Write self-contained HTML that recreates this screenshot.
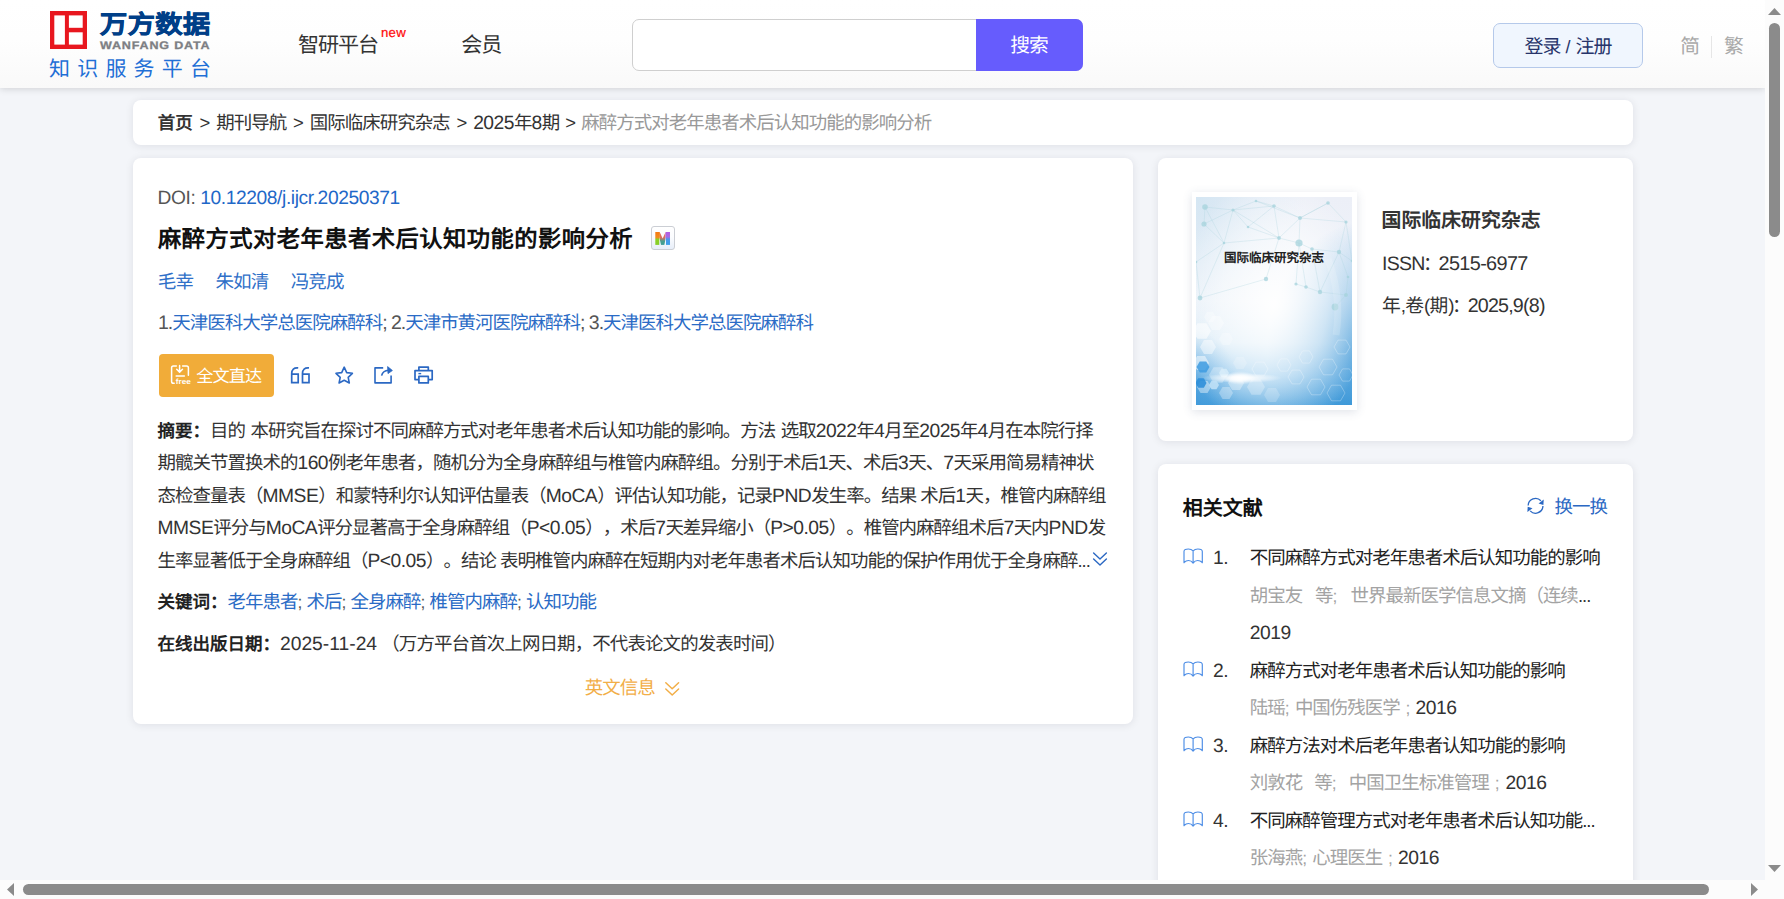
<!DOCTYPE html>
<html lang="zh-CN">
<head>
<meta charset="utf-8">
<title>麻醉方式对老年患者术后认知功能的影响分析</title>
<style>
*{box-sizing:border-box;margin:0;padding:0}
html,body{width:1784px;height:899px;overflow:hidden;background:#f3f5f9}
body{position:relative;text-rendering:geometricPrecision;text-spacing-trim:space-all;font-family:"Liberation Sans",sans-serif;color:#333;font-size:17.5px}
.abs{position:absolute;white-space:nowrap}
.t{position:absolute;white-space:nowrap;height:30px;line-height:30px}
a{color:inherit;text-decoration:none}
b{font-weight:700}
/* viewport (content minus scrollbars) */
#vp{position:absolute;left:0;top:0;width:1765px;height:880px;overflow:hidden;background:#f3f5f9}
/* header */
#hd{position:absolute;left:0;top:0;width:1765px;height:88px;background:linear-gradient(#ffffff 0%,#fefefe 45%,#f9f9f9 100%);box-shadow:0 1px 7px rgba(0,0,0,.15)}
.card{position:absolute;background:#fff;border-radius:8px;box-shadow:0 1px 9px rgba(20,25,40,.095)}
.blue{color:#2a6bc6}
.gray{color:#a3a3a3;word-spacing:1.15px}
.l{font-size:1.1em;line-height:1;letter-spacing:-.5px}
.z{font-size:105.5%;letter-spacing:-.052em;line-height:1}
.z b,.z .n{font-size:.948em;letter-spacing:0}
.z .l{font-size:1.0427em}
.sep{display:inline-block;width:23.5px;text-align:center}
/* scrollbars */
#vs{position:absolute;left:1765px;top:0;width:19px;height:880px;background:#fcfcfc}
#hs{position:absolute;left:0;top:880px;width:1765px;height:19px;background:#fcfcfc}
#cn{position:absolute;left:1765px;top:880px;width:19px;height:19px;background:#fcfcfc}
.thumb{position:absolute;background:#8b8b8b;border-radius:6px}
</style>
</head>
<body>
<div id="vp">

<!-- ================= HEADER ================= -->
<div id="hd">

<!-- logo mark -->
<svg class="abs" style="left:50px;top:11px" width="37" height="38" viewBox="0 0 37 38">
<rect x="0" y="0" width="37" height="38" fill="#e8171f"/>
<rect x="4.3" y="4.4" width="10.6" height="29.2" fill="#fff"/>
<rect x="18.9" y="4.4" width="13.8" height="12.4" fill="#fff"/>
<rect x="18.9" y="21.3" width="13.8" height="12.3" fill="#fff"/>
</svg>
<div class="abs" id="lg1" style="left:100px;top:7px;height:36px;line-height:36px;font-size:27.2px;font-weight:900;color:#003f88;-webkit-text-stroke:.75px #003f88;letter-spacing:0.45px;transform-origin:0 50%;transform:scale(1,.92)">万方数据</div>
<div class="abs" id="lg2" style="left:100px;top:38.8px;height:14px;line-height:14px;font-size:11px;font-weight:700;color:#7d7f83;-webkit-text-stroke:.3px #7d7f83;letter-spacing:.72px;transform-origin:0 50%;transform:scaleX(1.14)">WANFANG DATA</div>
<div class="abs" id="lg3" style="left:49px;top:54.7px;height:30px;line-height:30px;font-size:21px;font-weight:300;color:#1f6fd6;letter-spacing:7.2px">知识服务平台</div>
<!-- nav -->
<div class="abs" id="nv1" style="left:298px;top:31.3px;height:30px;line-height:30px;font-size:20px;color:#333"><span class="z">智研平台</span></div>
<div class="abs" id="nvnew" style="left:380.9px;top:24.9px;height:16px;line-height:16px;font-size:13.2px;letter-spacing:.35px;color:#ff0a0a;-webkit-text-stroke:.22px #ff0a0a">new</div>
<div class="abs" id="nv2" style="left:461.3px;top:31.3px;height:30px;line-height:30px;font-size:20px;color:#333"><span class="z">会员</span></div>
<!-- search -->
<div class="abs" style="left:632px;top:19px;width:451px;height:52px;border:1px solid #cfcfcf;border-radius:7px;background:#fff"></div>
<div class="abs" id="sbtn" style="left:975.5px;top:19px;width:107px;height:52px;border-radius:0 7px 7px 0;background:#665cfd;color:#fff;font-size:18.75px;line-height:54.6px;text-align:center"><span class="z">搜索</span></div>
<!-- login -->
<div class="abs" id="login" style="left:1493px;top:23px;width:150px;height:45px;border:1px solid #b5c9ea;border-radius:7px;background:#f0f6fe;color:#27346a;font-size:18px;letter-spacing:.3px;line-height:44px;text-align:center;padding-top:1px"><span class="z">登录<span class="n"> / </span>注册</span></div>
<div class="abs" id="jian" style="left:1680.3px;top:32px;height:30px;line-height:30px;font-size:18.75px;color:#a9a9a9"><span class="z">简</span></div>
<div class="abs" style="left:1711px;top:36px;width:1px;height:22px;background:#e6e6e6"></div>
<div class="abs" id="fan" style="left:1724px;top:32px;height:30px;line-height:30px;font-size:18.75px;color:#a9a9a9"><span class="z">繁</span></div>

</div>

<!-- ================= BREADCRUMB ================= -->
<div class="card" style="left:133px;top:100px;width:1500px;height:45px">

<div class="abs" id="crumb" style="left:24.7px;top:8px;height:30px;line-height:30px;font-size:17.5px;color:#333"><span class="z"><b id="c0">首页</b><span class="sep">&gt;</span><span id="c1">期刊导航</span><span class="sep">&gt;</span><span id="c2">国际临床研究杂志</span><span class="sep">&gt;</span><span id="c3"><span class="l">2025</span>年<span class="l">8</span>期</span><span class="sep" style="width:22.2px">&gt;</span><span id="c4" style="color:#999">麻醉方式对老年患者术后认知功能的影响分析</span></span></div>

</div>

<!-- ================= MAIN CARD ================= -->
<div class="card" id="main" style="left:133px;top:158px;width:1000px;height:565.5px">

<div class="t" id="doi" style="left:24.5px;top:25.8px;font-size:19.2px;letter-spacing:-.4px"><span style="color:#555">DOI: </span><span class="blue" id="doin" style="color:#1f68c8">10.12208/j.ijcr.20250371</span></div>
<div class="t" id="ttl" style="left:25px;top:66.3px;font-size:23.3px;letter-spacing:.45px;font-weight:700;color:#111">麻醉方式对老年患者术后认知功能的影响分析</div>
<!-- M badge -->
<div class="abs" style="left:518.3px;top:68.2px;width:23.4px;height:23.6px;border:1.5px solid #cbced4;border-radius:3px;background:linear-gradient(#ffffff 0%,#fbfcfe 45%,#e7eef9 100%)"></div>
<svg class="abs" style="left:518px;top:68px" width="24" height="24" viewBox="0 0 24 24">
<defs>
<linearGradient id="m1" x1="0" y1="0" x2="0" y2="1"><stop offset="0" stop-color="#f67a12"/><stop offset=".42" stop-color="#f08a1e"/><stop offset=".58" stop-color="#8ccf24"/><stop offset="1" stop-color="#86cf2a"/></linearGradient>
<linearGradient id="m2" x1="0" y1="0" x2="0" y2="1"><stop offset="0" stop-color="#ee6a55"/><stop offset=".45" stop-color="#d9705f"/><stop offset=".7" stop-color="#4a9f8f"/><stop offset="1" stop-color="#3d9c94"/></linearGradient>
<linearGradient id="m3" x1="0" y1="0" x2="0" y2="1"><stop offset="0" stop-color="#b45be3"/><stop offset=".38" stop-color="#a86be6"/><stop offset=".55" stop-color="#4a98ea"/><stop offset="1" stop-color="#3a9fea"/></linearGradient>
<clipPath id="mc"><path d="M4.3 18.9 V6 H8.7 L11.65 12.4 L14.6 6 H19 V18.9 H15 V11.3 L13.3 18.9 H10 L8.3 11.3 V18.9 Z"/></clipPath>
</defs>
<g clip-path="url(#mc)"><rect x="4" y="6" width="4.9" height="12.9" fill="url(#m1)"/><rect x="8.9" y="6" width="5.6" height="12.9" fill="url(#m2)"/><rect x="14.5" y="6" width="4.8" height="12.9" fill="url(#m3)"/></g>
</svg>
<div class="t blue" id="au" style="left:24.8px;top:108.8px;font-size:17.6px;color:#3070c8"><span class="z"><span id="au1">毛幸</span><span id="au2" style="margin-left:22.5px">朱如清</span><span id="au3" style="margin-left:22.5px">冯竞成</span></span></div>
<div class="t" id="aff" style="left:25px;top:149.5px;font-size:17.5px;color:#555"><span class="z"><span class="n" style="font-size:1.06em;letter-spacing:-1.05px">1.</span><span class="blue">天津医科大学总医院麻醉科</span><span class="n" style="font-size:1.06em;letter-spacing:-1.05px">; 2.</span><span class="blue">天津市黄河医院麻醉科</span><span class="n" style="font-size:1.06em;letter-spacing:-1.05px">; 3.</span><span class="blue">天津医科大学总医院麻醉科</span></span></div>
<!-- full text button -->
<div class="abs" id="ftbtn" style="left:26px;top:196px;width:115px;height:43px;border-radius:4px;background:#f1ac39"></div>
<svg class="abs" style="left:36px;top:205px" width="24" height="24" viewBox="0 0 24 24" fill="none" stroke="#fff" stroke-width="1.5" stroke-linecap="round" stroke-linejoin="round">
<path d="M7.4 2.9 H4.4 Q2.6 2.9 2.6 4.7 V18.4 Q2.6 20.2 4.4 20.2 H5.2"/>
<path d="M13.6 2.9 H17.6 Q19.4 2.9 19.4 4.7 V12.3"/>
<path d="M10.6 2.6 V8.6 M7.7 6.3 L10.6 9.1 L13.5 6.3"/>
<path d="M7.2 12.9 H15.4"/>
<text x="6.8" y="20.7" font-family="Liberation Sans, sans-serif" font-size="7.6" font-weight="700" fill="#fff" stroke="none" textLength="15" lengthAdjust="spacingAndGlyphs">free</text>
</svg>
<div class="abs" id="fttx" style="left:63.2px;top:203.6px;height:30px;line-height:30px;font-size:16.25px;color:#fff"><span class="z">全文直达</span></div>
<!-- action icons -->
<svg class="abs" style="left:155px;top:206px" width="24" height="22" viewBox="0 0 24 22" fill="none" stroke="#2b68c3" stroke-width="1.7" stroke-linejoin="miter">
<path d="M10.2 3.9 Q3.7 3.3 3.7 9.6 V18.6 H10.2 V10.2 H3.7"/>
<path d="M21 3.9 Q14.5 3.3 14.5 9.6 V18.6 H21 V10.2 H14.5"/>
</svg>
<svg class="abs" style="left:200px;top:206px" width="22" height="22" viewBox="0 0 22 22" fill="none" stroke="#2b68c3" stroke-width="1.6" stroke-linejoin="round">
<path d="M11.2 3.2 L13.7 8.6 L19.4 9.3 L15.2 13.3 L16.3 19 L11.2 16.2 L6.1 19 L7.2 13.3 L3 9.3 L8.7 8.6 Z"/>
</svg>
<svg class="abs" style="left:239px;top:206px" width="24" height="22" viewBox="0 0 24 22" fill="none" stroke="#2b68c3" stroke-width="1.6" stroke-linejoin="round" stroke-linecap="butt">
<path d="M11.2 3.9 H3 V18.9 H19.1 V11.4"/>
<path d="M9.6 11.6 Q10.8 6.6 16.6 6.3"/>
<path d="M15.6 2.6 L20.4 6.5 L16 9.6 Z" fill="#2b68c3" stroke-width="0.8"/>
</svg>
<svg class="abs" style="left:279px;top:206px" width="24" height="22" viewBox="0 0 24 22" fill="none" stroke="#2b68c3" stroke-width="1.7" stroke-linejoin="round">
<path d="M6.9 6.6 V3.1 H16.3 V6.6"/>
<path d="M6.9 15.6 H3 V6.6 H20.2 V15.6 H16.3"/>
<path d="M6.9 12.4 H16.3 V18.9 H6.9 Z"/>
<path d="M6.4 9.6 H9.2" stroke-width="1.4"/>
</svg>
<!-- abstract -->
<div class="abs" id="abs" style="left:24.5px;top:256.5px;font-size:17.5px;line-height:32.5px;color:#333">
<div id="L1" style="word-spacing:1.3px"><span class="z"><b style="color:#222">摘要：</b><span id="L1t">目的 本研究旨在探讨不同麻醉方式对老年患者术后认知功能的影响。方法 选取<span class="l">2022</span>年<span class="l">4</span>月至<span class="l">2025</span>年<span class="l">4</span>月在本院行择</span></span></div>
<div id="L2"><span class="z">期髋关节置换术的<span class="l">160</span>例老年患者，随机分为全身麻醉组与椎管内麻醉组。分别于术后<span class="l">1</span>天、术后<span class="l">3</span>天、<span class="l">7</span>天采用简易精神状</span></div>
<div id="L3"><span class="z">态检查量表（<span class="l">MMSE</span>）和蒙特利尔认知评估量表（<span class="l">MoCA</span>）评估认知功能，记录<span class="l">PND</span>发生率。结果 术后<span class="l">1</span>天，椎管内麻醉组</span></div>
<div id="L4"><span class="z" style="letter-spacing:-.0535em"><span class="l">MMSE</span>评分与<span class="l">MoCA</span>评分显著高于全身麻醉组（<span class="l">P&lt;0.05</span>），术后<span class="l">7</span>天差异缩小（<span class="l">P&gt;0.05</span>）。椎管内麻醉组术后<span class="l">7</span>天内<span class="l">PND</span>发</span></div>
<div id="L5"><span class="z">生率显著低于全身麻醉组（<span class="l">P&lt;0.05</span>）。结论 表明椎管内麻醉在短期内对老年患者术后认知功能的保护作用优于全身麻醉...</span></div>
</div>
<svg class="abs" style="left:958px;top:393px" width="18" height="16" viewBox="0 0 18 16" fill="none" stroke="#2b68c3" stroke-width="1.4" stroke-linecap="round" stroke-linejoin="round">
<path d="M2.6 2 L9 8 L15.4 2 M2.6 8 L9 14 L15.4 8"/>
</svg>
<div class="t" id="kw" style="left:24.5px;top:428.5px"><span class="z"><b style="color:#222">关键词：</b><span id="kwt" style="color:#555"><span class="blue">老年患者</span><span class="n" style="letter-spacing:-.35px">; </span><span class="blue">术后</span><span class="n" style="letter-spacing:-.35px">; </span><span class="blue">全身麻醉</span><span class="n" style="letter-spacing:-.35px">; </span><span class="blue">椎管内麻醉</span><span class="n" style="letter-spacing:-.35px">; </span><span class="blue">认知功能</span></span></span></div>
<div class="t" id="pd" style="left:24.5px;top:470.5px"><span class="z"><b style="color:#222">在线出版日期：</b><span id="pdd" class="l" style="letter-spacing:0">2025-11-24</span> <span id="pdn" style="letter-spacing:-.047em">（万方平台首次上网日期，不代表论文的发表时间）</span></span></div>
<div class="t" id="en" style="left:451.7px;top:515px;color:#f2ae47"><span class="z">英文信息</span></div>
<svg class="abs" style="left:530px;top:522px" width="18" height="18" viewBox="0 0 18 18" fill="none" stroke="#f2ae47" stroke-width="1.5" stroke-linecap="round" stroke-linejoin="round">
<path d="M2.8 2.8 L9.2 8.8 L15.6 2.8 M2.8 9 L9.2 15 L15.6 9"/>
</svg>

</div>

<!-- ================= JOURNAL CARD ================= -->
<div class="card" id="jn" style="left:1158px;top:158px;width:475px;height:283px">

<div class="abs" style="left:33.5px;top:34px;width:165px;height:218px;background:#fff;box-shadow:0 2px 9px rgba(60,80,120,.16)"></div>
<svg class="abs" style="left:38px;top:39px" width="156" height="208" viewBox="0 0 156 208">
<defs>
<linearGradient id="cv1" x1="0" y1="0" x2="0" y2="1"><stop offset="0" stop-color="#eceff7"/><stop offset=".5" stop-color="#f0f4fa"/><stop offset=".7" stop-color="#d6e9f6"/><stop offset=".86" stop-color="#8fc6ec"/><stop offset="1" stop-color="#4aa0db"/></linearGradient>
<radialGradient id="cv2" cx=".5" cy=".52" r=".62"><stop offset="0" stop-color="#fff" stop-opacity=".95"/><stop offset=".55" stop-color="#fff" stop-opacity=".55"/><stop offset="1" stop-color="#fff" stop-opacity="0"/></radialGradient>
<radialGradient id="cv3" cx="1.08" cy=".74" r=".62"><stop offset="0" stop-color="#2f8fd4" stop-opacity=".8"/><stop offset="1" stop-color="#2f8fd4" stop-opacity="0"/></radialGradient>
<radialGradient id="cv4" cx="-.02" cy=".94" r=".3"><stop offset="0" stop-color="#3c97da" stop-opacity=".7"/><stop offset="1" stop-color="#3c97da" stop-opacity="0"/></radialGradient>
<radialGradient id="cv5" cx=".5" cy=".5" r=".5"><stop offset="0" stop-color="#fff" stop-opacity="1"/><stop offset=".4" stop-color="#fff" stop-opacity=".7"/><stop offset="1" stop-color="#fff" stop-opacity="0"/></radialGradient>
<radialGradient id="cv6" cx="0" cy="0" r=".7"><stop offset="0" stop-color="#cfe4f2" stop-opacity=".8"/><stop offset="1" stop-color="#cfe4f2" stop-opacity="0"/></radialGradient>
</defs>
<rect width="156" height="208" fill="url(#cv1)"/>
<rect width="156" height="208" fill="url(#cv6)"/>
<rect width="156" height="208" fill="url(#cv3)"/>
<rect width="156" height="208" fill="url(#cv4)"/>
<rect width="156" height="208" fill="url(#cv2)"/>
<g stroke="#a9d2dc" stroke-width=".7" stroke-opacity=".42"><line x1="9" y1="10" x2="37" y2="13"/><line x1="37" y1="13" x2="60" y2="4"/><line x1="37" y1="13" x2="78" y2="9"/><line x1="60" y1="4" x2="78" y2="9"/><line x1="78" y1="9" x2="104" y2="21"/><line x1="104" y1="21" x2="132" y2="6"/><line x1="132" y1="6" x2="150" y2="25"/><line x1="9" y1="10" x2="8" y2="27"/><line x1="8" y1="27" x2="37" y2="13"/><line x1="37" y1="13" x2="28" y2="46"/><line x1="28" y1="46" x2="83" y2="41"/><line x1="83" y1="41" x2="104" y2="21"/><line x1="83" y1="41" x2="103" y2="46"/><line x1="103" y1="46" x2="116" y2="52"/><line x1="104" y1="21" x2="103" y2="46"/><line x1="104" y1="21" x2="150" y2="25"/><line x1="103" y1="46" x2="110" y2="90"/><line x1="116" y1="52" x2="124" y2="95"/><line x1="150" y1="25" x2="143" y2="55"/><line x1="143" y1="55" x2="124" y2="95"/><line x1="124" y1="95" x2="150" y2="98"/><line x1="150" y1="98" x2="139" y2="110"/><line x1="78" y1="9" x2="52" y2="30"/><line x1="52" y1="30" x2="83" y2="41"/><line x1="8" y1="27" x2="28" y2="46"/><line x1="28" y1="46" x2="0" y2="65"/><line x1="0" y1="65" x2="4" y2="101"/><line x1="83" y1="41" x2="70" y2="82"/><line x1="70" y1="82" x2="4" y2="101"/><line x1="116" y1="52" x2="143" y2="55"/><line x1="60" y1="4" x2="104" y2="21"/><line x1="132" y1="6" x2="104" y2="21"/><line x1="100" y1="87" x2="110" y2="90"/><line x1="110" y1="90" x2="124" y2="95"/><line x1="103" y1="46" x2="100" y2="87"/><line x1="9" y1="10" x2="28" y2="46"/><line x1="52" y1="30" x2="37" y2="13"/><line x1="156" y1="64" x2="143" y2="55"/><line x1="152" y1="80" x2="150" y2="98"/><line x1="152" y1="80" x2="143" y2="55"/><line x1="37" y1="13" x2="83" y2="41"/><line x1="4" y1="101" x2="28" y2="46"/><line x1="78" y1="9" x2="83" y2="41"/><line x1="150" y1="25" x2="156" y2="64"/></g>
<g fill="#a5d3dc" fill-opacity=".75"><circle cx="9" cy="10" r="2.8"/><circle cx="37" cy="13" r="1.6"/><circle cx="60" cy="4" r="1.3"/><circle cx="78" cy="9" r="1.8"/><circle cx="104" cy="21" r="2"/><circle cx="132" cy="6" r="1.8"/><circle cx="150" cy="25" r="1.6"/><circle cx="8" cy="27" r="2.6"/><circle cx="83" cy="41" r="1.9"/><circle cx="103" cy="46" r="3.6"/><circle cx="116" cy="52" r="1.8"/><circle cx="70" cy="82" r="2.2"/><circle cx="100" cy="87" r="1.6"/><circle cx="110" cy="90" r="1.8"/><circle cx="124" cy="95" r="2.2"/><circle cx="152" cy="80" r="1.3"/><circle cx="150" cy="98" r="2"/><circle cx="4" cy="101" r="2.4"/><circle cx="139" cy="110" r="3.4"/><circle cx="28" cy="46" r="1.3"/><circle cx="52" cy="30" r="1.3"/><circle cx="143" cy="55" r="2.2"/><circle cx="156" cy="64" r="1.3"/><circle cx="0" cy="65" r="1.3"/></g>
<g fill="#fff" fill-opacity="0.55"><polygon points="15.0,134.0 10.5,141.8 1.5,141.8 -3.0,134.0 1.5,126.2 10.5,126.2"/></g><g fill="#fff" fill-opacity="0.35"><polygon points="28.0,126.0 24.0,132.9 16.0,132.9 12.0,126.0 16.0,119.1 24.0,119.1"/></g><g fill="#fff" fill-opacity="0.45"><polygon points="20.0,150.0 16.0,156.9 8.0,156.9 4.0,150.0 8.0,143.1 16.0,143.1"/></g><g fill="#fff" fill-opacity="0.25"><polygon points="37.0,142.0 33.5,148.1 26.5,148.1 23.0,142.0 26.5,135.9 33.5,135.9"/></g><g fill="#fff" fill-opacity="0.5"><polygon points="13.0,166.0 9.0,172.9 1.0,172.9 -3.0,166.0 1.0,159.1 9.0,159.1"/></g><g fill="#fff" fill-opacity="0.3"><polygon points="31.0,178.0 26.5,185.8 17.5,185.8 13.0,178.0 17.5,170.2 26.5,170.2"/></g><g fill="#fff" fill-opacity="0.4"><polygon points="15.0,190.0 11.5,196.1 4.5,196.1 1.0,190.0 4.5,183.9 11.5,183.9"/></g><g fill="#fff" fill-opacity="0.35"><polygon points="48.0,186.0 44.0,192.9 36.0,192.9 32.0,186.0 36.0,179.1 44.0,179.1"/></g><g fill="#fff" fill-opacity="0.28"><polygon points="69.0,190.0 64.5,197.8 55.5,197.8 51.0,190.0 55.5,182.2 64.5,182.2"/></g><g fill="#fff" fill-opacity="0.3"><polygon points="37.0,196.0 33.5,202.1 26.5,202.1 23.0,196.0 26.5,189.9 33.5,189.9"/></g><g fill="#fff" fill-opacity="0.3"><polygon points="20.0,120.0 17.0,125.2 11.0,125.2 8.0,120.0 11.0,114.8 17.0,114.8"/></g><g fill="#fff" fill-opacity="0.2"><polygon points="51.0,166.0 47.5,172.1 40.5,172.1 37.0,166.0 40.5,159.9 47.5,159.9"/></g><g fill="#fff" fill-opacity="0.2"><polygon points="84.0,198.0 80.0,204.9 72.0,204.9 68.0,198.0 72.0,191.1 80.0,191.1"/></g><g fill="#3d9be0" fill-opacity="0.85"><polygon points="13.5,170.0 10.2,175.6 3.8,175.6 0.5,170.0 3.7,164.4 10.2,164.4"/></g><g fill="#2f8fd9" fill-opacity="0.9"><polygon points="10.5,186.0 7.8,190.8 2.3,190.8 -0.5,186.0 2.2,181.2 7.8,181.2"/></g><g fill="#bfe0f6" fill-opacity="0.9"><polygon points="23.0,188.0 20.5,192.3 15.5,192.3 13.0,188.0 15.5,183.7 20.5,183.7"/></g><g fill="#d9edfa" fill-opacity="0.8"><polygon points="33.0,176.0 30.5,180.3 25.5,180.3 23.0,176.0 25.5,171.7 30.5,171.7"/></g><g fill="none" stroke="#fff" stroke-opacity=".35" stroke-width=".8"><polygon points="141.0,170.0 136.5,177.8 127.5,177.8 123.0,170.0 127.5,162.2 136.5,162.2"/><polygon points="154.0,150.0 150.0,156.9 142.0,156.9 138.0,150.0 142.0,143.1 150.0,143.1"/><polygon points="129.0,190.0 124.5,197.8 115.5,197.8 111.0,190.0 115.5,182.2 124.5,182.2"/><polygon points="108.0,180.0 104.0,186.9 96.0,186.9 92.0,180.0 96.0,173.1 104.0,173.1"/><polygon points="149.0,196.0 144.5,203.8 135.5,203.8 131.0,196.0 135.5,188.2 144.5,188.2"/><polygon points="95.0,168.0 91.5,174.1 84.5,174.1 81.0,168.0 84.5,161.9 91.5,161.9"/><polygon points="157.0,178.0 153.5,184.1 146.5,184.1 143.0,178.0 146.5,171.9 153.5,171.9"/><polygon points="72.0,172.0 68.0,178.9 60.0,178.9 56.0,172.0 60.0,165.1 68.0,165.1"/><polygon points="117.0,160.0 113.5,166.1 106.5,166.1 103.0,160.0 106.5,153.9 113.5,153.9"/></g>
<ellipse cx="46" cy="181" rx="40" ry="5" fill="url(#cv5)"/>
<ellipse cx="44" cy="181" rx="16" ry="7" fill="url(#cv5)"/>
<path d="M132 62 Q146 100 140 138" stroke="#fff" stroke-opacity=".16" stroke-width="7" fill="none"/>
</svg>
<div class="abs" id="cvt" style="left:38px;top:89px;width:156px;height:22px;line-height:22px;text-align:center;font-size:12.5px;font-weight:700;color:#222;letter-spacing:0">国际临床研究杂志</div>
<div class="t" id="jt" style="left:223.6px;top:47.5px;font-size:19.8px;letter-spacing:.1px;font-weight:700;color:#333">国际临床研究杂志</div>
<div class="t" id="ji" style="left:224px;top:90.5px;font-size:18.75px;color:#333"><span class="l" id="ji1" style="font-size:1.04em;letter-spacing:-.75px">ISSN</span><span style="margin:0 -3.2px 0 -1.5px">：</span><span class="l" id="ji2" style="font-size:1.06em;letter-spacing:-.65px">2515-6977</span></div>
<div class="t" id="jy" style="left:224px;top:132.5px;font-size:18.75px;color:#333">年<span class="l" style="font-size:1em;letter-spacing:-.6px">,</span>卷<span class="l" style="font-size:1em;letter-spacing:-.9px">(</span>期<span class="l" style="font-size:1em;letter-spacing:-.9px">)</span><span style="margin:0 -3px 0 -1.7px">：</span><span class="l" id="jy2" style="font-size:1.05em;letter-spacing:-.8px">2025,9(8)</span></div>

</div>

<!-- ================= RELATED CARD ================= -->
<div class="card" id="rel" style="left:1158px;top:464px;width:475px;height:520px">

<div class="t" id="rh" style="left:24.8px;top:30px;font-size:20px;font-weight:700;color:#111">相关文献</div>
<svg class="abs" style="left:367.8px;top:32.4px" width="20" height="20" viewBox="0 0 20 20" fill="none" stroke="#2b68c3" stroke-width="1.3" stroke-linecap="butt">
<path d="M2.15 9.6 A7.4 7.4 0 0 1 14.9 4.7"/><path d="M16.95 10 A7.4 7.4 0 0 1 4.2 14.9"/>
<path d="M17.7 3.6 L17.4 8.9 L12.6 7.4 Z" fill="#2b68c3" stroke="none"/><path d="M1.4 16 L1.7 10.7 L6.5 12.2 Z" fill="#2b68c3" stroke="none"/>
</svg>
<div class="t blue" id="rsw" style="left:396.6px;top:28.2px;color:#2b68c3"><span class="z">换一换</span></div>
<svg class="abs" style="left:24px;top:84px" width="22" height="18" viewBox="0 0 22 18" fill="none" stroke="#4c8de6" stroke-width="1.15" stroke-linejoin="round" stroke-linecap="round"><path d="M2 14.7 L2 3.5 C2 1.7 4 .95 6.3 .95 C8.5 .95 10 1.6 11.1 2.8 C12.2 1.6 13.7 .95 15.9 .95 C18.2 .95 20.3 1.7 20.3 3.5 L20.3 14.7 M2 14.7 C3.5 13.1 5 12.5 6.5 12.5 C8.4 12.5 10 13.5 11.1 15.1 C12.2 13.5 13.8 12.5 15.7 12.5 C17.2 12.5 18.8 13.1 20.3 14.7 M11.1 2.8 V15"/></svg><div class="t" style="left:55px;top:79px;color:#333"><span class="l">1.</span></div><div class="t" id="r1t" style="left:91.8px;top:79px;color:#222"><span class="z">不同麻醉方式对老年患者术后认知功能的影响</span></div><div class="t gray" id="r1m" style="left:91.8px;top:116.5px"><span class="z">胡宝友<span class="n" style="letter-spacing:.35px">&nbsp; </span>等<span class="n" style="letter-spacing:.35px">;&nbsp; </span>世界最新医学信息文摘（连续<span style="color:#333">...</span></span></div><div class="t" id="r1y" style="left:91.8px;top:154px;color:#333"><span class="l" style="color:#333">2019</span></div>
<svg class="abs" style="left:24px;top:196.5px" width="22" height="18" viewBox="0 0 22 18" fill="none" stroke="#4c8de6" stroke-width="1.15" stroke-linejoin="round" stroke-linecap="round"><path d="M2 14.7 L2 3.5 C2 1.7 4 .95 6.3 .95 C8.5 .95 10 1.6 11.1 2.8 C12.2 1.6 13.7 .95 15.9 .95 C18.2 .95 20.3 1.7 20.3 3.5 L20.3 14.7 M2 14.7 C3.5 13.1 5 12.5 6.5 12.5 C8.4 12.5 10 13.5 11.1 15.1 C12.2 13.5 13.8 12.5 15.7 12.5 C17.2 12.5 18.8 13.1 20.3 14.7 M11.1 2.8 V15"/></svg><div class="t" style="left:55px;top:191.5px;color:#333"><span class="l">2.</span></div><div class="t" id="r2t" style="left:91.8px;top:191.5px;color:#222"><span class="z">麻醉方式对老年患者术后认知功能的影响</span></div><div class="t gray" id="r2m" style="left:91.8px;top:229.0px"><span class="z">陆瑶<span class="n" style="letter-spacing:-.4px">; </span>中国伤残医学<span class="n" style="letter-spacing:-.4px"> ; </span><span class="l" style="color:#333">2016</span></span></div>
<svg class="abs" style="left:24px;top:271.5px" width="22" height="18" viewBox="0 0 22 18" fill="none" stroke="#4c8de6" stroke-width="1.15" stroke-linejoin="round" stroke-linecap="round"><path d="M2 14.7 L2 3.5 C2 1.7 4 .95 6.3 .95 C8.5 .95 10 1.6 11.1 2.8 C12.2 1.6 13.7 .95 15.9 .95 C18.2 .95 20.3 1.7 20.3 3.5 L20.3 14.7 M2 14.7 C3.5 13.1 5 12.5 6.5 12.5 C8.4 12.5 10 13.5 11.1 15.1 C12.2 13.5 13.8 12.5 15.7 12.5 C17.2 12.5 18.8 13.1 20.3 14.7 M11.1 2.8 V15"/></svg><div class="t" style="left:55px;top:266.5px;color:#333"><span class="l">3.</span></div><div class="t" id="r3t" style="left:91.8px;top:266.5px;color:#222"><span class="z">麻醉方法对术后老年患者认知功能的影响</span></div><div class="t gray" id="r3m" style="left:91.8px;top:304.0px"><span class="z">刘敦花<span class="n">&nbsp; </span>等<span class="n">;&nbsp; </span>中国卫生标准管理<span class="n"> ; </span><span class="l" style="color:#333">2016</span></span></div>
<svg class="abs" style="left:24px;top:346.5px" width="22" height="18" viewBox="0 0 22 18" fill="none" stroke="#4c8de6" stroke-width="1.15" stroke-linejoin="round" stroke-linecap="round"><path d="M2 14.7 L2 3.5 C2 1.7 4 .95 6.3 .95 C8.5 .95 10 1.6 11.1 2.8 C12.2 1.6 13.7 .95 15.9 .95 C18.2 .95 20.3 1.7 20.3 3.5 L20.3 14.7 M2 14.7 C3.5 13.1 5 12.5 6.5 12.5 C8.4 12.5 10 13.5 11.1 15.1 C12.2 13.5 13.8 12.5 15.7 12.5 C17.2 12.5 18.8 13.1 20.3 14.7 M11.1 2.8 V15"/></svg><div class="t" style="left:55px;top:341.5px;color:#333"><span class="l">4.</span></div><div class="t" id="r4t" style="left:91.8px;top:341.5px;color:#222"><span class="z">不同麻醉管理方式对老年患者术后认知功能...</span></div><div class="t gray" id="r4m" style="left:91.8px;top:379.0px"><span class="z">张海燕<span class="n" style="letter-spacing:-.4px">; </span>心理医生<span class="n" style="letter-spacing:-.4px"> ; </span><span class="l" style="color:#333">2016</span></span></div>

</div>

</div>

<!-- ================= SCROLLBARS ================= -->
<div id="vs">
<svg class="abs" style="left:0;top:0" width="19" height="880" viewBox="0 0 19 880">
<path d="M3 15 L9.5 8 L16 15 Z" fill="#8b8b8b"/>
<path d="M3 865 L16 865 L9.5 872 Z" fill="#8b8b8b"/>
</svg>
<div class="thumb" style="left:4px;top:23px;width:11px;height:214px"></div>
</div>
<div id="hs">
<svg class="abs" style="left:0;top:0" width="1765" height="19" viewBox="0 0 1765 19">
<path d="M14 3 L7 9.5 L14 16 Z" fill="#8b8b8b"/>
<path d="M1751 3 L1758 9.5 L1751 16 Z" fill="#8b8b8b"/>
</svg>
<div class="thumb" style="left:23px;top:4px;width:1686px;height:11px"></div>
</div>
<div id="cn"></div>
</body>
</html>
